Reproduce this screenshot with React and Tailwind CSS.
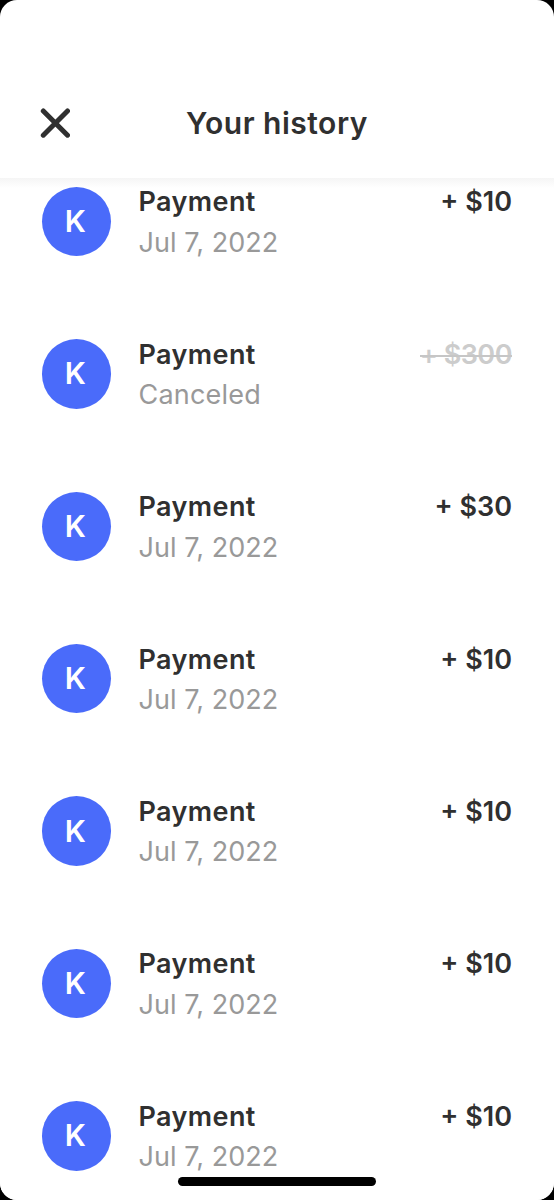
import React from 'react';

const payments = [
  { id: 1, note: 'Jul 7, 2022', amount: '$10' },
  { id: 2, note: 'Canceled', amount: '$300', canceled: true },
  { id: 3, note: 'Jul 7, 2022', amount: '$30' },
  { id: 4, note: 'Jul 7, 2022', amount: '$10' },
  { id: 5, note: 'Jul 7, 2022', amount: '$10' },
  { id: 6, note: 'Jul 7, 2022', amount: '$10' },
  { id: 7, note: 'Jul 7, 2022', amount: '$10' },
];

function PaymentRow({ payment }) {
  return (
    <li className="flex h-[152.4px] shrink-0 items-start">
      <div className="flex size-[69.5px] shrink-0 items-center justify-center rounded-full bg-[#4a6bfa] pr-[2px] text-[30px] font-semibold text-white">
        K
      </div>

      <div className="ml-[27.5px] flex-1 pt-[0.6px] whitespace-nowrap">
        <p className="text-[27px] leading-[30px] font-semibold tracking-[0.4px] text-[#303030]">Payment</p>
        <p className={`mt-[10.5px] text-[27px] leading-[30px] font-normal text-[#999999] ${payment.canceled ? 'tracking-[0.2px]' : 'tracking-[0.05px]'}`}>
          {payment.note}
        </p>
      </div>

      {payment.canceled ? (
        <p className="relative mt-[0.6px] text-[27px] leading-[30px] font-semibold tracking-[-0.5px] whitespace-nowrap text-[#cccccc]">
          + {payment.amount}
          <span className="absolute top-[15.5px] right-0 left-0 h-[2px] bg-[#c6c6c6]" />
        </p>
      ) : (
        <p className="mt-[0.6px] text-[27px] leading-[30px] font-semibold whitespace-nowrap text-[#303030]">
          + {payment.amount}
        </p>
      )}
    </li>
  );
}

function App() {
  return (
    <div className="h-[1200px] w-[554px] bg-black font-['Inter',sans-serif]">
      <div className="relative flex h-full flex-col overflow-hidden rounded-[17px] bg-white">

        {/*Header*/}
        <header className="grid h-[178px] shrink-0 grid-cols-[1fr_auto_1fr] items-center px-10 pt-[68px]">
          <button aria-label="Close" className="justify-self-start">
            <svg className="block size-[30px]" viewBox="0 0 30 30" fill="none" stroke="#303030" strokeWidth="5" strokeLinecap="round">
              <path d="M3.3 3 27.5 27.2M27.5 3 3.3 27.2" />
            </svg>
          </button>
          <h1 className="text-[30px] leading-[40px] font-semibold tracking-[0.5px] whitespace-nowrap text-[#303030]">Your history</h1>
        </header>

        {/*Payments*/}
        <main className="min-h-0 flex-1 overflow-hidden bg-linear-to-b from-[#f5f5f5] to-white to-[10px] bg-no-repeat">
          <ul className="flex flex-col pt-[8.8px] pr-[42px] pl-[41.5px]">
            {payments.map(p => <PaymentRow key={p.id} payment={p} />)}
          </ul>
        </main>

        {/*Home indicator*/}
        <div className="absolute bottom-[14px] left-[178px] h-[9px] w-[198px] rounded-full bg-black" />
      </div>
    </div>
  );
}

export default App;
